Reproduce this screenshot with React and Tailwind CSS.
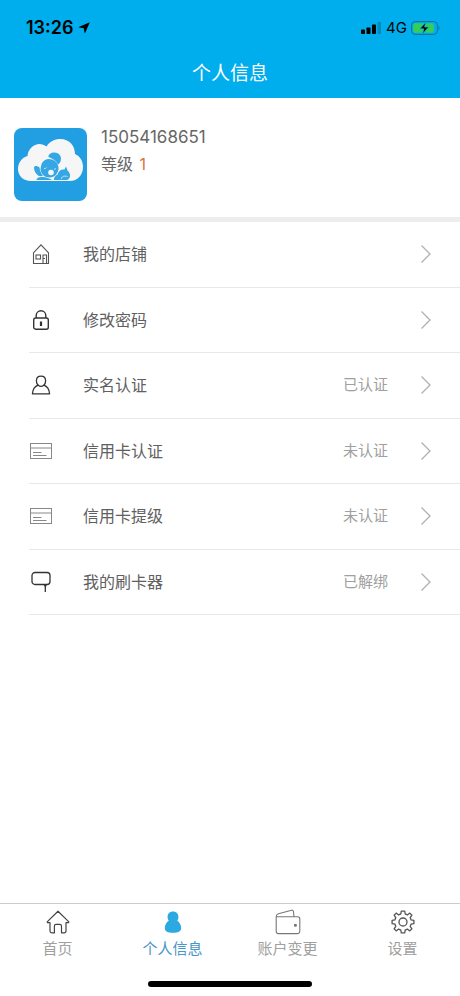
import React, { useState } from 'react';

const ShopIcon = () => (
  <svg width="18" height="22" viewBox="0 0 18 22" fill="none" stroke="#555" strokeWidth="1.1">
    <path d="M1.500 9.500V20.500H16.500V9.500M1.200 10.200L9 1.800L16.800 10.200" />
    <rect x="4" y="12" width="4.500" height="4" />
    <path d="M11 20.500V12H14.500V20.500M11.500 15.500H13" />
  </svg>
);

const LockIcon = () => (
  <svg width="18" height="22" viewBox="0 0 18 22" fill="none" stroke="#333" strokeWidth="1.4">
    <rect x="1.7" y="9" width="14.6" height="11.2" rx="2" />
    <path d="M4.2 9V6.6a4.8 4.8 0 0 1 9.6 0V9" />
    <path d="M9 12.5v4.5" strokeWidth="2.2" />
  </svg>
);

const PersonIcon = () => (
  <svg width="20" height="22" viewBox="0 0 20 22" fill="none" stroke="#333" strokeWidth="1.3" strokeLinejoin="round">
    <path d="M7.2 11.2C5.8 10.2 5.4 8.4 5.4 6.8C5.4 4 7.2 2.2 10 2.2S14.6 4 14.6 6.8C14.6 8.4 14.2 10.2 12.8 11.2" />
    <path d="M7.2 11.2C8.8 12.6 11.2 12.6 12.8 11.2C16.2 12.4 18.2 15 18.6 19.8H1.4C1.8 15 3.8 12.4 7.2 11.2Z" />
  </svg>
);

const CardIcon = () => (
  <svg width="24" height="18" viewBox="0 0 24 18" fill="none" stroke="#888" strokeWidth="1">
    <rect x="1.5" y="1.5" width="21" height="15" />
    <path d="M1.5 6H22.5" />
    <path d="M4 10.5H12.5M4 13.5H17.5" />
  </svg>
);

const ReaderIcon = () => (
  <svg width="20" height="22" viewBox="0 0 20 22" fill="none" stroke="#333" strokeWidth="1.3">
    <rect x="1" y="1.5" width="18" height="12" rx="3" />
    <path d="M14.3 14v7" />
    <path d="M12.6 13.5h3.4l-1.7 2.5z" fill="#333" strokeWidth="0.4" />
  </svg>
);

const ChevronIcon = () => (
  <svg width="12" height="20" viewBox="0 0 12 20" fill="none" stroke="#b0b0b0" strokeWidth="1.3">
    <path d="M1.5 1.5L10 10L1.5 18.5" />
  </svg>
);

const HomeIcon = () => (
  <svg width="24" height="24" viewBox="0 0 24 24" fill="none" stroke="#444" strokeWidth="1.2" strokeLinejoin="round">
    <path d="M12 1.2L1.4 11.6C1 12.2 1.4 12.7 2 12.7H4V21C4 22.2 4.6 22.8 5.8 22.8H8.4V16.2C8.4 15 9 14.4 10 14.4H13.8C14.9 14.4 15.5 15 15.5 16.2V22.8H18C19.4 22.8 20 22.2 20 21V12.7H22C22.700 12.700 23 12.200 22.600 11.600Z" />
  </svg>
);

const ProfileIcon = () => (
  <svg width="24" height="24" viewBox="0 0 24 24" fill="#2ba9e0">
    <path d="M12 1.600C15.200 1.600 17.400 3.800 17.400 6.700C17.400 8.400 17 9.600 16.200 10.800C18.700 12.300 20.200 15.200 20.200 18.200C20.200 21.400 17 22.800 12 22.800S3.800 21.400 3.800 18.200C3.800 15.200 5.300 12.300 7.800 10.800C7 9.600 6.600 8.400 6.600 6.700C6.600 3.800 8.800 1.600 12 1.600Z" />
  </svg>
);

const WalletIcon = () => (
  <svg width="26" height="26" viewBox="0 0 26 26" fill="none" stroke="#777" strokeWidth="1.1" strokeLinejoin="round">
    <path d="M1.2 7.8V22.2A2.4 2.4 0 0 0 3.6 24.6H22.4A2.4 2.4 0 0 0 24.8 22.2V10A2.2 2.2 0 0 0 22.6 7.8H1.2C1.2 6.2 1.8 5.2 3.4 4.8L16.6 1.2C17.6 1 18.2 1.4 18.4 2.4L19 7.8" />
    <circle cx="20.4" cy="16.2" r="1" fill="#777" />
  </svg>
);

const GearIcon = () => (
  <svg width="24" height="24" viewBox="0 0 24 24" fill="none" stroke="#555" strokeWidth="1.3" strokeLinejoin="round">
    <path d="M10.3 1.1H13.7L14.2 4Q15.4 4.3 16.4 4.9L18.8 3.1L20.9 5.2L19.2 7.7Q19.8 8.7 20 9.8L22.9 10.3V13.7L20 14.2Q19.8 15.3 19.2 16.3L20.9 18.8L18.8 20.9L16.4 19.1Q15.4 19.7 14.2 20L13.7 22.9H10.3L9.8 20Q8.6 19.7 7.6 19.1L5.2 20.9L3.1 18.8L4.8 16.3Q4.2 15.3 4 14.2L1.1 13.7V10.3L4 9.8Q4.2 8.7 4.8 7.7L3.1 5.2L5.2 3.1L7.6 4.9Q8.6 4.3 9.8 4Z" />
    <circle cx="12" cy="12" r="4" />
  </svg>
);

const Avatar = () => (
  <svg className="shrink-0" width="73" height="73" viewBox="0 0 73 73">
    <rect width="73" height="73" rx="8" fill="#229ee3" />
    <path d="M17 53C9 53 4 47.500 4 41C4 34.500 8 29.500 13.500 28C14 21 19.500 16 25.500 16C28 16 30.500 17 32.500 18.500C35.500 13.500 40.500 11 46.500 11C55 11 61 17.500 61 26C66 28 69 33 69 39C69 47 63.500 53 56 53Z" fill="#f6f6f6" />
    <g fill="#36a7e5">
      <path d="M34.500 29C34 26.500 37 24.500 40.500 24.500C44.500 24.500 47.200 27.500 47 31C46.800 34 45.500 35.500 44 36.500C41.500 32.500 38.500 30.500 34.500 29Z" />
      <path d="M27.500 36C29.500 31.500 34 30 38 31.500C42.500 33 45 37 44.500 41.500C43.500 46.500 40 49.500 35.500 49.500C30.500 49.500 27 46 26.500 41Z" />
      <path d="M20 39.500C20.500 37.500 23 37.500 25.500 39.500C26 43 27 45.500 29 47.500C27.500 48.500 25.500 48.500 24 47.500C21.500 45.500 20 42.500 20 39.500Z" />
      <path d="M22.500 52C22.500 49.500 25.500 48.500 29.500 49C33 49.500 36 50.500 38 52Z" />
      <path d="M40 52C39.500 49.500 41.500 47.500 43.500 46.500C44.500 43 47 41 50.500 41.500L52 38.500L53.500 42.500C57 45.500 57 50.500 53 52Z" />
    </g>
    <circle cx="37" cy="44.500" r="2.800" fill="#f6f6f6" />
    <path d="M30 40.500Q31.500 41 32.500 39.500M40 41.500L42 40.500M47.500 51C47.500 48.500 50 47.500 53.500 48.500" fill="none" stroke="#f6f6f6" strokeWidth="0.700" />
  </svg>
);

const StatusBar = () => (
  <div className="flex h-12 items-center justify-between pt-2 pr-5 pl-6 text-black">
    <div className="flex items-center gap-1 pl-0.5">
      <span className="text-lg leading-6 font-semibold">13:26</span>
      <svg width="12" height="12" viewBox="0 0 12 12">
        <path d="M11.8 0.2L0.3 5.2L5.8 6.2L6.8 11.8Z" />
      </svg>
    </div>
    <div className="flex items-center gap-1">
      <svg width="21" height="12" viewBox="0 0 21 12">
        <rect x="0" y="7.500" width="4" height="4.500" rx="0.800" />
        <rect x="5.500" y="5.500" width="4" height="6.500" rx="0.800" />
        <rect x="11" y="2.500" width="4" height="9.500" rx="0.800" />
        <rect x="16.500" y="0" width="3.500" height="12" rx="0.800" opacity="0.2" />
      </svg>
      <span className="text-[15px] leading-6">4G</span>
      <svg width="29" height="14" viewBox="0 0 29 14">
        <rect x="0.6" y="0.6" width="25.8" height="12.8" rx="3.5" fill="none" stroke="#10709c" strokeWidth="1" />
        <rect x="2.2" y="2.2" width="20.6" height="9.6" rx="2" fill="#35cc58" />
        <path d="M27.500 4.800C29 5.500 29 8.500 27.500 9.200Z" fill="#10709c" />
        <path d="M14.8 1L9 7.8H12.8L11.600 13L17.600 6H13.6Z" fill="#000" stroke="#00aeee" strokeWidth="0.8" />
      </svg>
    </div>
  </div>
);

const menu = [
  { label: '我的店铺', icon: ShopIcon },
  { label: '修改密码', icon: LockIcon },
  { label: '实名认证', icon: PersonIcon, status: '已认证' },
  { label: '信用卡认证', icon: CardIcon, status: '未认证' },
  { label: '信用卡提级', icon: CardIcon, status: '未认证' },
  { label: '我的刷卡器', icon: ReaderIcon, status: '已解绑' },
];

const tabs = [
  { label: '首页', icon: HomeIcon },
  { label: '个人信息', icon: ProfileIcon },
  { label: '账户变更', icon: WalletIcon },
  { label: '设置', icon: GearIcon },
];

const App = () => {
  const [activeTab, setActiveTab] = useState('个人信息');

  return (
    <div className="flex min-h-screen flex-col bg-white font-['Inter','Noto_Sans_CJK_SC',sans-serif]">
      <header className="bg-[#00aeee]">
        <StatusBar />
        <h1 className="pt-0.5 text-center text-[19px] leading-12 text-white">个人信息</h1>
      </header>

      <section className="flex gap-[14px] border-b-[5px] border-[#ededed] px-[14px] pt-[30px] pb-4">
        <Avatar />
        <div className="-mt-1 leading-[26px] text-[#666]">
          <p className="text-[17px]">15054168651</p>
          <p className="text-base leading-7">
            等级 <span className="ml-0.5 text-[#e0703f]">1</span>
          </p>
        </div>
      </section>

      <ul className="grid min-h-[393px] auto-rows-fr pl-[29px]">
        {menu.map((item) => (
          <li key={item.label} className="border-b border-[#e8e8e8]">
            <button className="flex h-full w-full items-center pr-7 text-left">
              <span className="flex w-6 justify-center">
                <item.icon />
              </span>
              <span className="ml-[30px] flex-1 text-base text-[#606060]">{item.label}</span>
              {item.status && <span className="mr-8 text-[15px] leading-6 text-[#a0a0a0]">{item.status}</span>}
              <ChevronIcon />
            </button>
          </li>
        ))}
      </ul>

      <nav className="mt-auto border-t border-[#ccc] pb-[9px]">
        <div className="grid grid-cols-4 pt-1.5">
          {tabs.map((tab) => (
            <button key={tab.label} className="flex flex-col items-center gap-1" onClick={() => setActiveTab(tab.label)}>
              <span className="flex h-6 items-center">
                <tab.icon />
              </span>
              <span className={`text-[15px] leading-[22px] ${activeTab === tab.label ? 'text-[#4a95cb]' : 'text-[#a0a0a0]'}`}>
                {tab.label}
              </span>
            </button>
          ))}
        </div>
        <div className="mx-auto mt-[21px] h-1.5 w-41 rounded-full bg-black" />
      </nav>
    </div>
  );
};

export default App;
